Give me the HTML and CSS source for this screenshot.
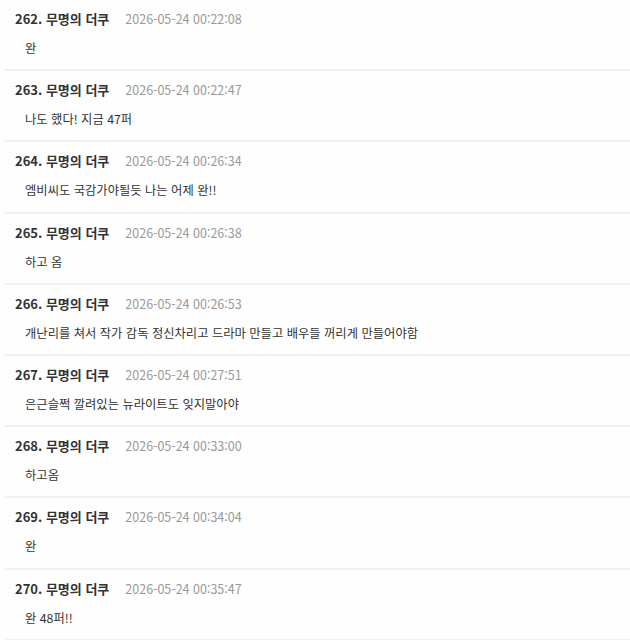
FILE: index.html
```html
<!DOCTYPE html>
<html lang="ko">
<head>
  <meta charset="UTF-8">
  <meta name="viewport" content="width=device-width, initial-scale=1.0">
  <title>댓글</title>
  <link rel="stylesheet" href="styles.css">
</head>
<body>
  <ul class="comments">
    <li class="comment">
      <div class="meta"><span class="name">262. 무명의 더쿠</span><span class="date">2026-05-24 00:22:08</span></div>
      <div class="text">완</div>
    </li>
    <li class="comment">
      <div class="meta"><span class="name">263. 무명의 더쿠</span><span class="date">2026-05-24 00:22:47</span></div>
      <div class="text">나도 했다! 지금 47퍼</div>
    </li>
    <li class="comment">
      <div class="meta"><span class="name">264. 무명의 더쿠</span><span class="date">2026-05-24 00:26:34</span></div>
      <div class="text">엠비씨도 국감가야될듯 나는 어제 완!!</div>
    </li>
    <li class="comment">
      <div class="meta"><span class="name">265. 무명의 더쿠</span><span class="date">2026-05-24 00:26:38</span></div>
      <div class="text">하고 옴</div>
    </li>
    <li class="comment">
      <div class="meta"><span class="name">266. 무명의 더쿠</span><span class="date">2026-05-24 00:26:53</span></div>
      <div class="text">개난리를 쳐서 작가 감독 정신차리고 드라마 만들고 배우들 꺼리게 만들어야함</div>
    </li>
    <li class="comment">
      <div class="meta"><span class="name">267. 무명의 더쿠</span><span class="date">2026-05-24 00:27:51</span></div>
      <div class="text">은근슬쩍 깔려있는 뉴라이트도 잊지말아야</div>
    </li>
    <li class="comment">
      <div class="meta"><span class="name">268. 무명의 더쿠</span><span class="date">2026-05-24 00:33:00</span></div>
      <div class="text">하고옴</div>
    </li>
    <li class="comment">
      <div class="meta"><span class="name">269. 무명의 더쿠</span><span class="date">2026-05-24 00:34:04</span></div>
      <div class="text">완</div>
    </li>
    <li class="comment">
      <div class="meta"><span class="name">270. 무명의 더쿠</span><span class="date">2026-05-24 00:35:47</span></div>
      <div class="text">완 48퍼!!</div>
    </li>
  </ul>
</body>
</html>
```

FILE: styles.css
```css
body {
  margin: 0;
  padding: 0;
  background: #fefefe;
  color: #333;
  font-family: "Noto Sans CJK KR", "Noto Sans", sans-serif;
}
.comments {
  list-style: none;
  margin: 0 0 0 5px;
  padding: 0;
}
.comment {
  padding: 10px 0 12.2px 10px;
  border-bottom: 2px solid #f2f2f2;
}
.meta {
  display: flex;
  align-items: center;
  gap: 16px;
  height: 18px;
  line-height: 18px;
}
.name {
  font-size: 13px;
  font-weight: bold;
  color: #333;
}
.date {
  font-size: 12.5px;
  color: #999;
}
.text {
  margin-top: 11px;
  padding-left: 10px;
  font-size: 12.3px;
  line-height: 18px;
  color: #333;
}
```
